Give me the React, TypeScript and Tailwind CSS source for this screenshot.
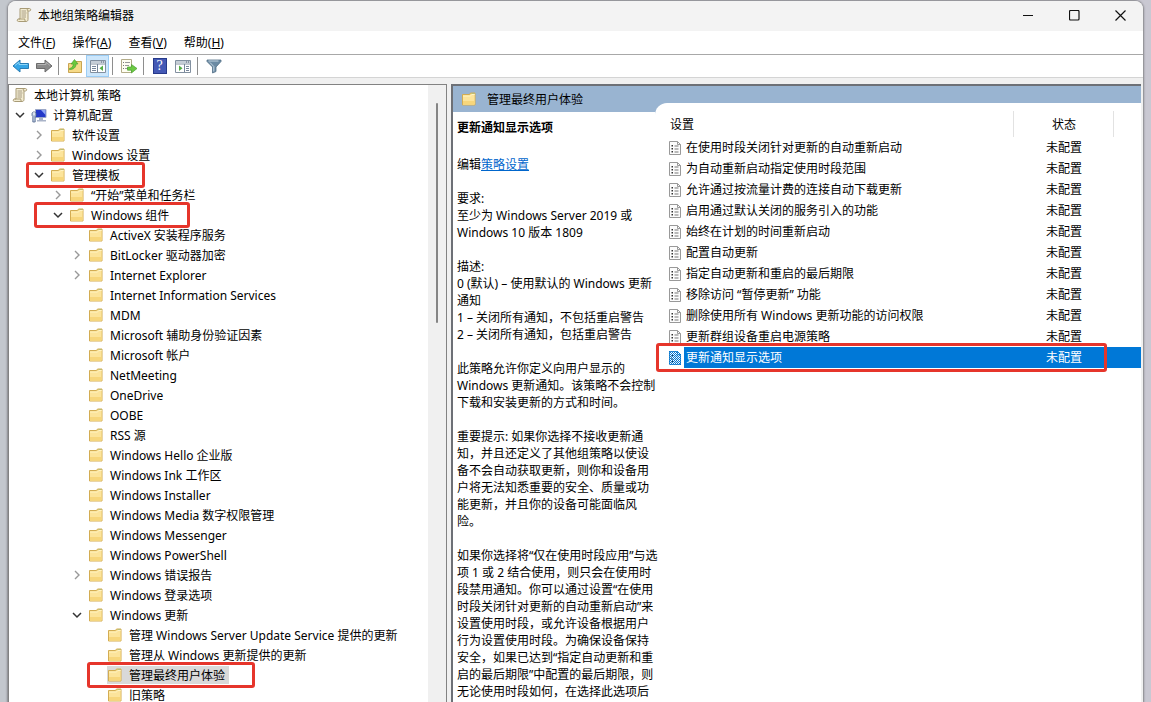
import React from 'react';

type NodeItem = {
  level: number;
  label: string;
  state?: 'open' | 'closed';
  icon?: 'scroll' | 'computer';
  mark?: string;
  selected?: boolean;
};

const nodes: NodeItem[] = [
  { level: 0, label: '本地计算机 策略', icon: 'scroll' },
  { level: 1, label: '计算机配置', icon: 'computer', state: 'open' },
  { level: 2, label: '软件设置', state: 'closed' },
  { level: 2, label: 'Windows 设置', state: 'closed' },
  { level: 2, label: '管理模板', state: 'open', mark: 'left-[17px] w-[119px]' },
  { level: 3, label: '“开始”菜单和任务栏', state: 'closed' },
  { level: 3, label: 'Windows 组件', state: 'open', mark: 'left-[25px] w-[156px]' },
  { level: 4, label: 'ActiveX 安装程序服务' },
  { level: 4, label: 'BitLocker 驱动器加密', state: 'closed' },
  { level: 4, label: 'Internet Explorer', state: 'closed' },
  { level: 4, label: 'Internet Information Services' },
  { level: 4, label: 'MDM' },
  { level: 4, label: 'Microsoft 辅助身份验证因素' },
  { level: 4, label: 'Microsoft 帐户' },
  { level: 4, label: 'NetMeeting' },
  { level: 4, label: 'OneDrive' },
  { level: 4, label: 'OOBE' },
  { level: 4, label: 'RSS 源' },
  { level: 4, label: 'Windows Hello 企业版' },
  { level: 4, label: 'Windows Ink 工作区' },
  { level: 4, label: 'Windows Installer' },
  { level: 4, label: 'Windows Media 数字权限管理' },
  { level: 4, label: 'Windows Messenger' },
  { level: 4, label: 'Windows PowerShell' },
  { level: 4, label: 'Windows 错误报告', state: 'closed' },
  { level: 4, label: 'Windows 登录选项' },
  { level: 4, label: 'Windows 更新', state: 'open' },
  { level: 5, label: '管理 Windows Server Update Service 提供的更新' },
  { level: 5, label: '管理从 Windows 更新提供的更新' },
  { level: 5, label: '管理最终用户体验', selected: true, mark: 'left-[78px] w-[168px]' },
  { level: 5, label: '旧策略' },
];

const indents = ['pl-0', 'pl-0', 'pl-[19px]', 'pl-[38px]', 'pl-[57px]', 'pl-[76px]'];

const settings = [
  '在使用时段关闭针对更新的自动重新启动',
  '为自动重新启动指定使用时段范围',
  '允许通过按流量计费的连接自动下载更新',
  '启用通过默认关闭的服务引入的功能',
  '始终在计划的时间重新启动',
  '配置自动更新',
  '指定自动更新和重启的最后期限',
  '移除访问 “暂停更新” 功能',
  '删除使用所有 Windows 更新功能的访问权限',
  '更新群组设备重启电源策略',
  '更新通知显示选项',
];

const description = [
  ['要求:', '至少为 Windows Server 2019 或', 'Windows 10 版本 1809'],
  ['描述:', '0 (默认) – 使用默认的 Windows 更新', '通知', '1 – 关闭所有通知，不包括重启警告', '2 – 关闭所有通知，包括重启警告'],
  ['此策略允许你定义向用户显示的', 'Windows 更新通知。该策略不会控制', '下载和安装更新的方式和时间。'],
  [
    '重要提示: 如果你选择不接收更新通',
    '知，并且还定义了其他组策略以使设',
    '备不会自动获取更新，则你和设备用',
    '户将无法知悉重要的安全、质量或功',
    '能更新，并且你的设备可能面临风',
    '险。',
  ],
  [
    '如果你选择将“仅在使用时段应用”与选',
    '项 1 或 2 结合使用，则只会在使用时',
    '段禁用通知。你可以通过设置“在使用',
    '时段关闭针对更新的自动重新启动”来',
    '设置使用时段，或允许设备根据用户',
    '行为设置使用时段。为确保设备保持',
    '安全，如果已达到“指定自动更新和重',
    '启的最后期限”中配置的最后期限，则',
    '无论使用时段如何，在选择此选项后',
  ],
];

function Scroll() {
  return (
    <svg width="16" height="16" viewBox="0 0 16 16" className="shrink-0">
      <path d="M4 1.5h9.5c1.6.1 1.6 2.4 0 2.5H12v8.5c0 1.200-.6 2-2 2H2.500c-1.700 0-1.700-2.500 0-2.500H4z" fill="#f3ecd2" stroke="#a89b76" />
      <path d="M12 4c-1.200-.4-1.200-2 .5-2.400M2.500 12H9c-.5.8-.2 2 1 2.400" fill="none" stroke="#a89b76" />
      <path d="M5.500 4h4.500M5.500 6h5M5.500 8h4.500M5.500 10h4.500" stroke="#948b72" strokeWidth=".8" />
    </svg>
  );
}

function Folder() {
  return (
    <svg width="16" height="16" viewBox="0 0 16 16" className="shrink-0">
      <path d="M1.500 3.500h7l1-1.500h4.500v12H1.500z" fill="#f8dc85" stroke="#d3ac52" />
      <path d="M2 5h7.500l1.200-1.500H13.500V13.500H2z" fill="#fce49b" />
      <path d="M2 5h7.500l1.200-1.500h3" fill="none" stroke="#fff3c4" />
      <path d="M10.500 2.500h3" stroke="#b9bd75" />
      <path d="M2 10h11.500v3.500H2z" fill="#f7d67b" />
    </svg>
  );
}

function Computer() {
  return (
    <svg width="16" height="16" viewBox="0 0 16 16" className="shrink-0">
      <path d="M4.500 2.500h10.500v8H4.500z" fill="#2338c9" stroke="#9aa7c7" />
      <path d="M10 3h4.500v5z" fill="#8fa5f4" />
      <path d="M8 11h4v2H8zM6 13h9v1.500H6z" fill="#a9b3c8" />
      <path d="M1 6.500l1-1.500h2l1 1.500v2L4.200 9.500V15H1.800V9.500L1 8.500z" fill="#b7c6dc" stroke="#53688e" strokeWidth=".8" />
      <path d="M3 5v3" stroke="#fff" />
    </svg>
  );
}

function Chevron({ open }: { open: boolean }) {
  return (
    <svg width="12" height="12" viewBox="0 0 12 12" fill="none">
      {open ? <path d="M2 4l4 4 4-4" stroke="#333" strokeWidth="1.500" /> : <path d="M4 2l4 4-4 4" stroke="#999" strokeWidth="1.400" />}
    </svg>
  );
}

function PolicyIcon({ selected }: { selected: boolean }) {
  return (
    <svg width="14" height="16" viewBox="0 0 14 16" className="shrink-0">
      <path d="M1.500 1.500h8l3 3v10h-11z" fill="#fcfcfc" stroke={selected ? '#3f8fc9' : '#999'} />
      <path d="M9.500 1.500v3h3" fill="none" stroke={selected ? '#3f8fc9' : '#999'} />
      <path d="M3.500 5h1.500v1.500H3.500zM3.500 8h1.500v1.500H3.500zM3.500 11h1.500v1.500H3.500z" fill="#333" />
      <path d="M6.500 6h4M6.500 9h4M6.500 12h4" stroke={selected ? '#9fc6dd' : '#777'} />
      {selected && (
        <>
          <defs>
            <pattern id="checker" width="2" height="2" patternUnits="userSpaceOnUse">
              <path d="M0 0h1v1H0zM1 1h1v1H1z" fill="#0078d7" />
            </pattern>
          </defs>
          <path d="M1 1h9l3 3v11H1z" fill="url(#checker)" />
        </>
      )}
    </svg>
  );
}

function Arrow({ back }: { back?: boolean }) {
  return (
    <svg width="18" height="16" viewBox="0 0 18 16">
      {back ? (
        <path d="M1 8l7-6v3.500h8.500v5H8V14z" fill="#35a5e6" stroke="#277cb4" strokeLinejoin="round" />
      ) : (
        <path d="M17 8l-7-6v3.500H1.500v5H10V14z" fill="#8b8b8b" stroke="#6b6b6b" strokeLinejoin="round" />
      )}
      {back ? <path d="M3 7.500l4-3.300v2.300h8.500" fill="none" stroke="#8dd5f8" /> : <path d="M15 7.500l-4-3.300v2.300H2.500" fill="none" stroke="#b5b5b5" />}
    </svg>
  );
}

function FolderUp() {
  return (
    <svg width="16" height="16" viewBox="0 0 16 16">
      <path d="M1.500 5.500h6l1-2h6v11h-13z" fill="#f6da88" stroke="#c9a553" />
      <path d="M2.500 10.500c2.500-.5 3.700-2 3.700-4.500H4L7.500 1.500 11 6H9c0 3.500-2.300 5.500-6.500 5.500z" fill="#6cc93c" stroke="#3f9a2c" strokeWidth=".6" />
    </svg>
  );
}

function Pane({ right }: { right?: boolean }) {
  return (
    <svg width="18" height="16" viewBox="0 0 18 16">
      <path d="M1.500 2.500h15v12h-15z" fill="#fff" stroke="#8290a0" />
      <path d="M2 3h14v2H2z" fill="#c6ced7" />
      <path d="M2 6h14" stroke="#8290a0" />
      <path d="M12 4h1M14 4h1" stroke="#536073" />
      {right ? (
        <>
          <path d="M10.500 6v8M12 8.500h3M12 10.500h3M12 12.500h3" stroke="#77869a" />
          <path d="M5 7.500l3.500 2.700L5 13z" fill="#54ad43" />
        </>
      ) : (
        <>
          <path d="M8.500 6v8M3 8.500h4M3 10.500h4M3 12.500h4" stroke="#77869a" />
          <path d="M14 7.500l-3.500 2.700L14 13z" fill="#54ad43" />
        </>
      )}
    </svg>
  );
}

function Export() {
  return (
    <svg width="18" height="16" viewBox="0 0 18 16">
      <path d="M1.500 1.500h10v13h-10z" fill="#fffef2" stroke="#b3ac89" />
      <path d="M3 4.500h1M3 7.500h1M3 10.500h1" stroke="#777" />
      <path d="M5 4.500h5M5 7.500h4M5 10.500h3" stroke="#9a9a9a" />
      <path d="M7.500 9h4V6.500L17 10.500 11.500 15v-2.800h-4z" fill="#6cca43" stroke="#4b9f30" strokeWidth=".7" />
    </svg>
  );
}

function Funnel() {
  return (
    <svg width="16" height="16" viewBox="0 0 16 16">
      <path d="M1 2h14v1.500L10 9v4.500L6.500 15V9L1 3.500z" fill="#6b8aa3" stroke="#526f86" strokeWidth=".8" />
      <path d="M2.500 3h10M4 4.500L7.800 8.500v5" fill="none" stroke="#c4d5e1" />
    </svg>
  );
}

function Separator() {
  return (
    <span className="flex pl-[3px] pr-1">
      <span className="h-[18px] w-px shrink-0 bg-[#8e8e8e]" />
    </span>
  );
}

function ToolButton({ label, active, children }: { label: string; active?: boolean; children: React.ReactNode }) {
  return (
    <button
      aria-label={label}
      className={`flex h-[22px] w-[23px] shrink-0 items-center justify-center ${active ? 'bg-[#cce6fb] outline outline-1 -outline-offset-1 outline-[#9bcdf5]' : ''}`}
    >
      {children}
    </button>
  );
}

function TreeRow({ node }: { node: NodeItem }) {
  return (
    <li role="treeitem" aria-selected={!!node.selected} aria-expanded={node.state ? node.state === 'open' : undefined} className={`relative flex h-5 items-center ${indents[node.level]}`}>
      {node.level > 0 && (
        <span className="flex w-[22px] shrink-0 justify-center">
          {node.state && (
            <button aria-label={`${node.label} 展开或折叠`} className="flex">
              <Chevron open={node.state === 'open'} />
            </button>
          )}
        </span>
      )}
      <button className={`flex h-[18px] items-center gap-1.5 whitespace-nowrap pr-1 ${node.level === 0 ? 'pl-[3px]' : ''} ${node.selected ? 'bg-[#d9d9d9]' : ''}`}>
        {node.icon === 'scroll' ? <Scroll /> : node.icon === 'computer' ? <Computer /> : <Folder />}
        <span>{node.label}</span>
      </button>
      {node.mark && <span className={`pointer-events-none absolute -top-[3px] h-[26px] rounded-[3px] border-[3px] border-[#e6352b] ${node.mark}`} />}
    </li>
  );
}

const menus = [
  ['文件', 'F'],
  ['操作', 'A'],
  ['查看', 'V'],
  ['帮助', 'H'],
];

export default function App() {
  return (
    <div className="h-screen overflow-hidden bg-gradient-to-r from-[#c3c7cd] to-[#c9c8d2] px-2 pt-px font-['Noto_Sans','Noto_Sans_CJK_SC',sans-serif] text-[12px] leading-[17px] text-black">
      <div className="flex h-full flex-col overflow-hidden rounded-t-lg bg-[#f0f0f0] shadow-[0_0_2px_1px_#85858a]">
        <header className="flex h-[30px] shrink-0 items-center bg-[#f3f3f3] pb-0.5">
          <div className="flex flex-1 items-center gap-1.5 pl-2">
            <Scroll />
            <h1>本地组策略编辑器</h1>
          </div>
          <button aria-label="最小化" className="flex h-full w-[46px] items-center justify-center">
            <svg width="10" height="10"><path d="M0 5.500h10" stroke="#111" /></svg>
          </button>
          <button aria-label="最大化" className="flex h-full w-[46px] items-center justify-center">
            <svg width="11" height="11"><rect x=".5" y=".5" width="9.500" height="9.500" rx="1" fill="none" stroke="#111" strokeWidth="1.200" /></svg>
          </button>
          <button aria-label="关闭" className="flex h-full w-[46px] items-center justify-center">
            <svg width="11" height="11"><path d="M.5.5l10 10M10.500.5l-10 10" stroke="#111" strokeWidth="1.200" /></svg>
          </button>
        </header>

        <nav className="flex h-6 shrink-0 items-center gap-px border-b border-[#a8a8a8] bg-white pl-0.5">
          {menus.map(([name, key]) => (
            <button key={key} className="px-2">
              {name}(<span className="underline">{key}</span>)
            </button>
          ))}
        </nav>

        <div role="toolbar" className="flex h-[23px] shrink-0 items-center border-b border-[#d4d4d4] bg-white pl-px">
          <ToolButton label="后退"><Arrow back /></ToolButton>
          <ToolButton label="前进"><Arrow /></ToolButton>
          <Separator />
          <ToolButton label="上移一级"><FolderUp /></ToolButton>
          <ToolButton label="显示或隐藏控制台树" active><Pane /></ToolButton>
          <Separator />
          <ToolButton label="导出列表"><Export /></ToolButton>
          <Separator />
          <ToolButton label="帮助">
            <span className="flex h-4 w-[14px] items-center justify-center border border-[#26398a] bg-[#4459b5] font-['Liberation_Serif',serif] text-[14px] leading-4 text-white">?</span>
          </ToolButton>
          <ToolButton label="显示或隐藏操作窗格"><Pane right /></ToolButton>
          <Separator />
          <ToolButton label="筛选器"><Funnel /></ToolButton>
        </div>

        <main className="flex min-h-0 flex-1 gap-1 pr-0.5 pt-1.5">
          <section className="flex w-[439px] shrink-0 overflow-hidden border-l border-r border-t border-[#828282] bg-white">
            <ul role="tree" className="min-w-0 flex-1">
              {nodes.map((node) => (
                <TreeRow key={node.label} node={node} />
              ))}
            </ul>
            <div className="flex w-[18px] shrink-0 justify-center bg-[#f0f0f0] pt-[18px]">
              <span className="h-[220px] w-0.5 rounded bg-[#858585]" />
            </div>
          </section>

          <section className="flex min-w-0 flex-1 flex-col overflow-hidden border-l-2 border-t-2 border-[#6d7076] bg-white">
            <div className="flex min-h-0 flex-1 bg-[#99b4d1]">
              <div className="flex w-[202px] shrink-0 flex-col">
                <div className="flex h-[26px] shrink-0 items-center gap-2.5 whitespace-nowrap pl-2">
                  <Folder />
                  <h2>管理最终用户体验</h2>
                </div>
                <article className="relative z-10 flex min-h-0 flex-1 flex-col gap-[17px] whitespace-nowrap bg-white pl-1 pt-[7px]">
                  <h3 className="pb-[3px] font-bold">更新通知显示选项</h3>
                  <p>编辑<a href="#edit" className="text-[#0066cc] underline">策略设置</a></p>
                  {description.map((lines) => (
                    <p key={lines[0]}>
                      {lines.map((line) => (
                        <span key={line} className="block">{line}</span>
                      ))}
                    </p>
                  ))}
                </article>
              </div>

              <div className="mt-[17px] min-w-0 flex-1 rounded-tl-xl bg-white pt-2">
                <table className="w-full table-fixed border-collapse text-left">
                  <colgroup>
                    <col />
                    <col className="w-[100px]" />
                    <col className="w-7" />
                  </colgroup>
                  <thead>
                    <tr className="h-[26px]">
                      <th className="border-r border-[#e2e2e2] p-0 pl-[15px] font-normal">设置</th>
                      <th className="border-r border-[#e2e2e2] p-0 pl-0.5 text-center font-normal">状态</th>
                      <td className="p-0" />
                    </tr>
                  </thead>
                  <tbody>
                    {settings.map((name) => {
                      const selected = name === '更新通知显示选项';
                      return (
                        <tr key={name} className={selected ? 'relative h-[21px] text-white' : 'h-[21px]'}>
                          <td className="p-0 pl-[13px]">
                            <div className="flex h-[21px] items-center gap-0.5">
                              <PolicyIcon selected={selected} />
                              <span className={`flex h-full flex-1 items-center whitespace-nowrap pl-0.5 ${selected ? 'bg-[#0078d7]' : ''}`}>{name}</span>
                            </div>
                            {selected && <span className="pointer-events-none absolute -top-1 bottom-[-4px] left-px right-[34px] rounded-[3px] border-[3px] border-[#e6352b]" />}
                          </td>
                          <td className={`p-0 pl-0.5 text-center ${selected ? 'bg-[#0078d7]' : ''}`}>未配置</td>
                          <td className={`p-0 ${selected ? 'bg-[#0078d7]' : ''}`} />
                        </tr>
                      );
                    })}
                  </tbody>
                </table>
              </div>
            </div>
          </section>
        </main>
      </div>
    </div>
  );
}
